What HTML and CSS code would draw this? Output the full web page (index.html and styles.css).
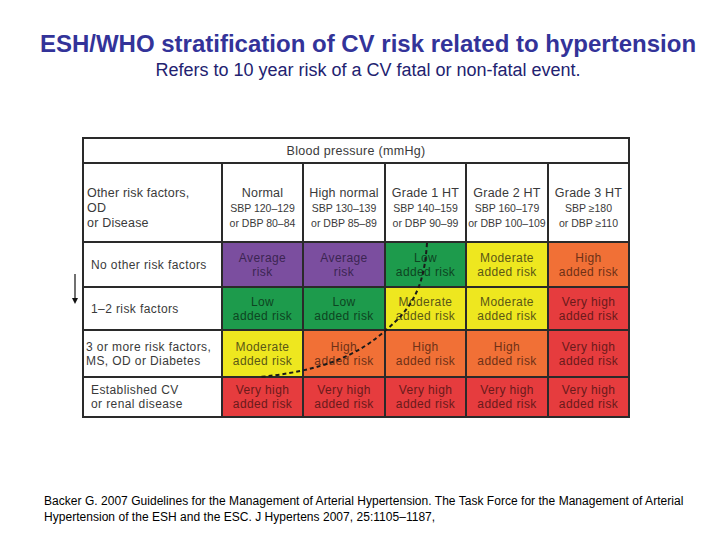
FILE: index.html
```html
<!DOCTYPE html>
<html lang="en">
<head>
<meta charset="utf-8">
<title>ESH/WHO stratification of CV risk</title>
<link rel="stylesheet" href="styles.css">
</head>
<body>
<main class="slide">
  <h1 class="title">ESH/WHO stratification of CV risk related to hypertension</h1>
  <p class="subtitle">Refers to 10 year risk of a CV fatal or non-fatal event.</p>

  <div class="figure">
    <svg class="arrow" width="10" height="32" viewBox="0 0 10 32">
      <line x1="5" y1="0" x2="5" y2="26" stroke="#111" stroke-width="1.2"/>
      <polygon points="2,24 8,24 5,30" fill="#111"/>
    </svg>

    <div class="risk-grid">
      <div class="cell bp-head">Blood pressure (mmHg)</div>

      <div class="cell head-first">Other risk factors,<br>OD<br>or Disease</div>
      <div class="cell head"><span class="h-main">Normal</span><span class="h-sub">SBP 120–129</span><span class="h-sub">or DBP 80–84</span></div>
      <div class="cell head"><span class="h-main">High normal</span><span class="h-sub">SBP 130–139</span><span class="h-sub">or DBP 85–89</span></div>
      <div class="cell head"><span class="h-main">Grade 1 HT</span><span class="h-sub">SBP 140–159</span><span class="h-sub">or DBP 90–99</span></div>
      <div class="cell head"><span class="h-main">Grade 2 HT</span><span class="h-sub">SBP 160–179</span><span class="h-sub">or DBP 100–109</span></div>
      <div class="cell head"><span class="h-main">Grade 3 HT</span><span class="h-sub">SBP ≥180</span><span class="h-sub">or DBP ≥110</span></div>

      <div class="cell label">No other risk factors</div>
      <div class="cell risk purple">Average<br>risk</div>
      <div class="cell risk purple">Average<br>risk</div>
      <div class="cell risk green">Low<br>added risk</div>
      <div class="cell risk yellow">Moderate<br>added risk</div>
      <div class="cell risk orange">High<br>added risk</div>

      <div class="cell label">1–2 risk factors</div>
      <div class="cell risk green">Low<br>added risk</div>
      <div class="cell risk green">Low<br>added risk</div>
      <div class="cell risk yellow">Moderate<br>added risk</div>
      <div class="cell risk yellow">Moderate<br>added risk</div>
      <div class="cell risk red">Very high<br>added risk</div>

      <div class="cell label label-tight">3 or more risk factors,<br>MS, OD or Diabetes</div>
      <div class="cell risk yellow">Moderate<br>added risk</div>
      <div class="cell risk orange">High<br>added risk</div>
      <div class="cell risk orange">High<br>added risk</div>
      <div class="cell risk orange">High<br>added risk</div>
      <div class="cell risk red">Very high<br>added risk</div>

      <div class="cell label">Established CV<br>or renal disease</div>
      <div class="cell risk red">Very high<br>added risk</div>
      <div class="cell risk red">Very high<br>added risk</div>
      <div class="cell risk red">Very high<br>added risk</div>
      <div class="cell risk red">Very high<br>added risk</div>
      <div class="cell risk red">Very high<br>added risk</div>
    </div>

    <svg class="curve" width="548" height="281" viewBox="0 0 548 281">
      <path d="M345,106 C343,135 338,160 315,183 C290,207 260,232 178,240" fill="none" stroke="#1a1a1a" stroke-width="2" stroke-dasharray="4 3"/>
    </svg>
  </div>

  <p class="ref">Backer G. 2007 Guidelines for the Management of Arterial Hypertension. The Task Force for the Management of Arterial<br>Hypertension of the ESH and the ESC. J Hypertens 2007, 25:1105–1187,</p>
</main>
</body>
</html>
```

FILE: styles.css
```css
html, body {
  margin: 0;
  padding: 0;
  background: #ffffff;
}

.slide {
  width: 720px;
  height: 540px;
  box-sizing: border-box;
  padding-top: 30px;
  font-family: "Liberation Sans", Arial, sans-serif;
}

.title {
  margin: 0;
  padding-left: 16px;
  text-align: center;
  font-size: 24px;
  line-height: 28px;
  font-weight: bold;
  color: #333399;
  white-space: nowrap;
}

.subtitle {
  margin: 1px 0 0;
  padding-left: 16px;
  text-align: center;
  font-size: 18px;
  line-height: 22px;
  color: #222270;
  white-space: nowrap;
}

.figure {
  position: relative;
  width: 548px;
  margin: 56px 0 0 82px;
}

.arrow {
  position: absolute;
  left: -12px;
  top: 137px;
}

.curve {
  position: absolute;
  left: 0;
  top: 0;
  pointer-events: none;
}

.risk-grid {
  display: grid;
  grid-template-columns: 137px 79px 80px 79px 80px 79px;
  grid-template-rows: 23px 77px 43px 41px 45px 38px;
  gap: 2px;
  padding: 2px;
  background: #2a2a2a;
  color: #3a3a3a;
  font-size: 12px;
  letter-spacing: 0.2px;
}

.cell {
  background: #ffffff;
  display: flex;
  flex-direction: column;
  justify-content: center;
  line-height: 14px;
}

.bp-head {
  grid-column: 1 / -1;
  align-items: center;
  font-size: 12.5px;
  letter-spacing: 0.3px;
}

.head-first {
  padding: 12px 0 0 3px;
  line-height: 15px;
  font-size: 12.5px;
}

.head {
  align-items: center;
  padding-top: 12px;
  line-height: 15px;
  white-space: nowrap;
}

.h-main {
  font-size: 12.5px;
}

.h-sub {
  font-size: 10.5px;
  letter-spacing: 0;
}

.label {
  padding-left: 7px;
  font-size: 12px;
  letter-spacing: 0.4px;
}

.label-tight {
  padding-left: 2px;
}

.risk {
  text-align: center;
  align-items: center;
  letter-spacing: 0.4px;
}

.purple { background: #7b4e9f; color: #3b2552; }
.green  { background: #1d9b4c; color: #0d4522; }
.yellow { background: #eee71f; color: #5a5716; }
.orange { background: #f17036; color: #6e3016; }
.red    { background: #e63c3e; color: #6a1a1b; }

.ref {
  margin: 75px 0 0;
  padding-left: 44px;
  font-size: 12px;
  line-height: 16px;
  color: #000000;
  letter-spacing: 0.03px;
  white-space: nowrap;
}
```
